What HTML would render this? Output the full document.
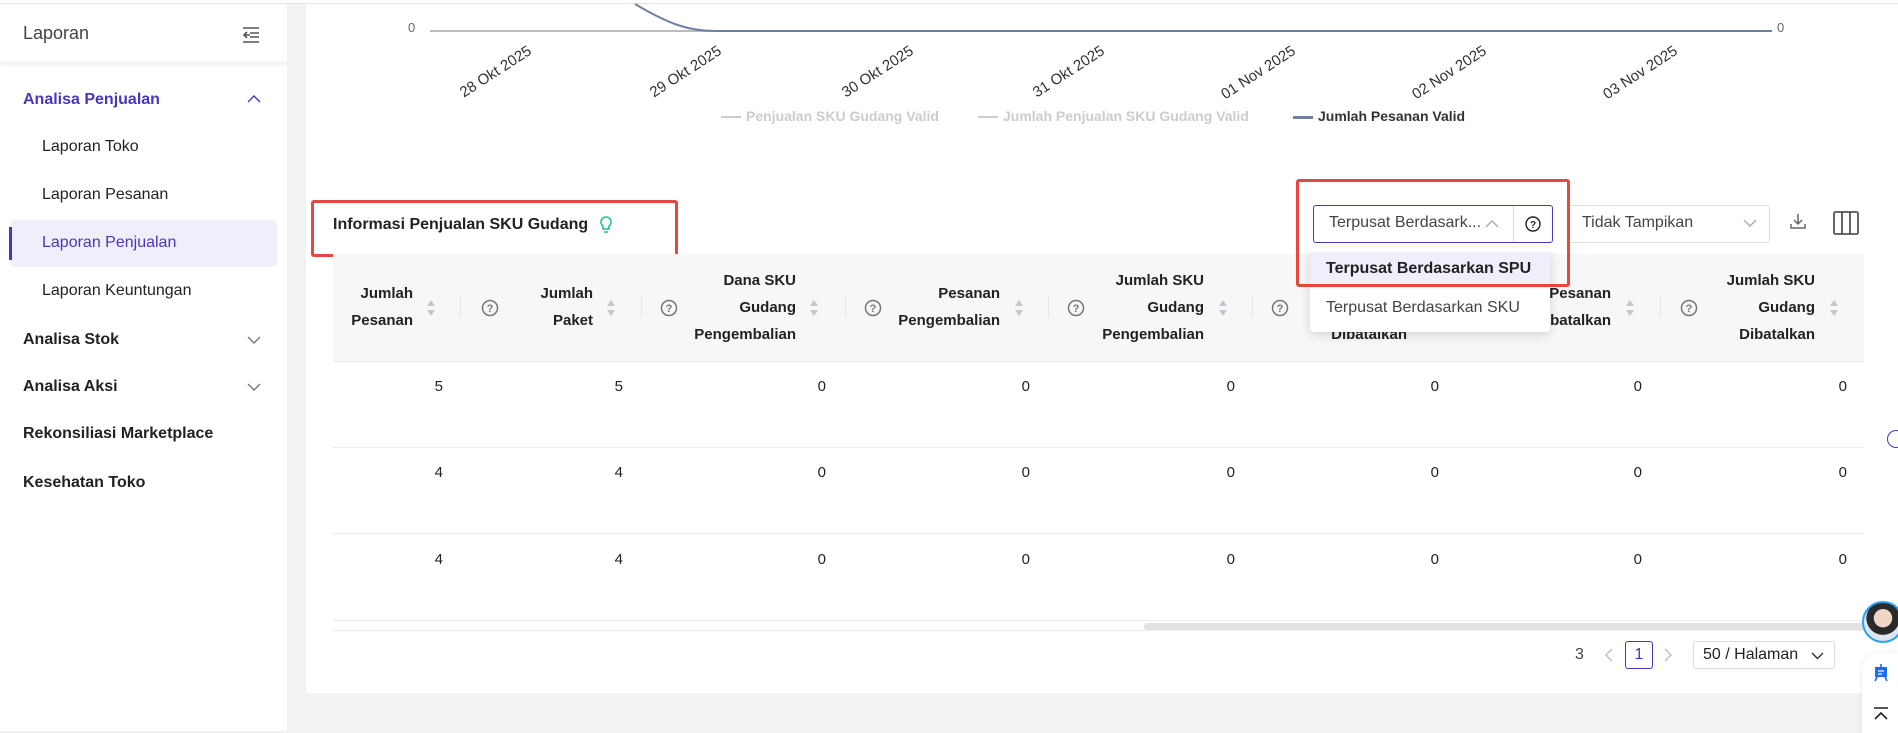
<!DOCTYPE html>
<html><head><meta charset="utf-8">
<style>
*{margin:0;padding:0;box-sizing:border-box}
body{width:1898px;height:731px;position:relative;overflow:hidden;background:#f2f2f2;font-family:"Liberation Sans",Arial,sans-serif;color:#1f1f1f}
.a{position:absolute}
.side{left:0;top:4px;width:287px;height:727px;background:#fff}
.mi{position:absolute;left:23px;font-size:16px;font-weight:bold;color:#222;line-height:20px}
.si{position:absolute;left:42px;font-size:16px;color:#222;line-height:20px}
.card{left:306px;top:4px;width:1558px;height:689px;background:#fff}
.hd{font-size:15px;font-weight:bold;color:#222;text-align:right;line-height:27px}
.sort{width:10px;height:18px}
.q{width:18px;height:18px}
.v{font-size:15px;color:#222;text-align:right;width:40px}
.sep{width:1px;height:22px;background:#e6e6e6;top:296px}
.dl{font-size:15px;color:#333;transform:rotate(-33deg);transform-origin:right center;white-space:nowrap;text-align:right;width:120px}
</style></head><body>
<div class="a" style="left:0;top:0;width:1898px;height:4px;background:#fff;border-bottom:1px solid #e2e2e2"></div>
<div class="a side">
  <div class="a" style="left:23px;top:19px;font-size:18px;color:#444">Laporan</div>
  <svg class="a" style="left:241px;top:22px" width="20" height="18" viewBox="0 0 20 18" fill="none" stroke="#555" stroke-width="1.6"><path d="M2 2h16M9 7h9M9 11h9M2 16h16M6 6l-3 3 3 3M3 9h6"/></svg>
  <div class="a" style="left:0;top:58px;width:287px;height:2px;box-shadow:0 1px 3px rgba(0,0,0,.08);background:#f3f3f3"></div>
  <div class="mi" style="top:86px;color:#4a36b8">Analisa Penjualan</div>
  <svg class="a" style="left:247px;top:90px" width="14" height="9" viewBox="0 0 14 9" fill="none" stroke="#4a36b8" stroke-width="1.4"><path d="M1 8l6-6 6 6"/></svg>
  <div class="si" style="top:133px">Laporan Toko</div>
  <div class="si" style="top:181px">Laporan Pesanan</div>
  <div class="a" style="left:10px;top:216px;width:267px;height:47px;background:#f1eefc;border-radius:5px"></div>
  <div class="a" style="left:9px;top:223px;width:3px;height:33px;background:#4a36b8"></div>
  <div class="si" style="top:229px;color:#4a36b8">Laporan Penjualan</div>
  <div class="si" style="top:277px">Laporan Keuntungan</div>
  <div class="mi" style="top:326px">Analisa Stok</div>
  <svg class="a" style="left:247px;top:332px" width="14" height="9" viewBox="0 0 14 9" fill="none" stroke="#777" stroke-width="1.4"><path d="M1 1l6 6 6-6"/></svg>
  <div class="mi" style="top:373px">Analisa Aksi</div>
  <svg class="a" style="left:247px;top:379px" width="14" height="9" viewBox="0 0 14 9" fill="none" stroke="#777" stroke-width="1.4"><path d="M1 1l6 6 6-6"/></svg>
  <div class="mi" style="top:420px">Rekonsiliasi Marketplace</div>
  <div class="mi" style="top:469px">Kesehatan Toko</div>
</div>
<div class="a" style="left:1864px;top:4px;width:34px;height:689px;background:#fff"></div>
<div class="a card"></div>
<!-- chart -->
<div class="a" style="left:408px;top:20px;font-size:13px;color:#666">0</div>
<div class="a" style="left:1777px;top:20px;font-size:13px;color:#666">0</div>
<svg class="a" style="left:420px;top:0" width="1360" height="40"><path d="M10 31H1352" stroke="#bbb" stroke-width="2"/><path d="M215 4C250 25 270 31 295 31H1352" stroke="#6e7fa3" stroke-width="2" fill="none"/></svg>
<div class="a dl" style="left:410px;top:41px">28 Okt 2025</div>
<div class="a dl" style="left:600px;top:41px">29 Okt 2025</div>
<div class="a dl" style="left:792px;top:41px">30 Okt 2025</div>
<div class="a dl" style="left:983px;top:41px">31 Okt 2025</div>
<div class="a dl" style="left:1174px;top:41px">01 Nov 2025</div>
<div class="a dl" style="left:1365px;top:41px">02 Nov 2025</div>
<div class="a dl" style="left:1556px;top:41px">03 Nov 2025</div>
<div class="a" style="left:721px;top:108px;font-size:14px;font-weight:bold;color:#ccc;white-space:nowrap"><span style="display:inline-block;width:20px;height:2px;background:#ccc;vertical-align:middle;margin-right:5px"></span>Penjualan SKU Gudang Valid</div>
<div class="a" style="left:978px;top:108px;font-size:14px;font-weight:bold;color:#ccc;white-space:nowrap"><span style="display:inline-block;width:20px;height:2px;background:#ccc;vertical-align:middle;margin-right:5px"></span>Jumlah Penjualan SKU Gudang Valid</div>
<div class="a" style="left:1293px;top:108px;font-size:14px;font-weight:bold;color:#333;white-space:nowrap"><span style="display:inline-block;width:20px;height:3px;background:#6e7fa3;vertical-align:middle;margin-right:5px"></span>Jumlah Pesanan Valid</div>
<!-- title -->
<div class="a" style="left:311px;top:200px;width:367px;height:57px;border:3px solid #e8473f;border-radius:3px"></div>
<div class="a" style="left:333px;top:216px;font-size:16px;font-weight:bold;color:#222">Informasi Penjualan SKU Gudang</div>
<svg class="a" style="left:600px;top:216px" width="12" height="18" viewBox="0 0 12 18" fill="none" stroke="#1fc18a" stroke-width="1.6"><path d="M6 1a5 5 0 0 0-3 9v3h6v-3a5 5 0 0 0-3-9zM4 16h4"/></svg>
<!-- table header -->
<div class="a" style="left:333px;top:254px;width:1531px;height:108px;background:#f7f7f7;border-bottom:1px solid #e8e8e8"></div>
<svg width="0" height="0" style="position:absolute"><defs>
<g id="s"><path d="M5 1l4 6H1z" fill="#c4c7cf"/><path d="M5 17l4-6H1z" fill="#c4c7cf"/></g>
<g id="q"><circle cx="9" cy="9" r="7.5" fill="none" stroke="#777" stroke-width="1.5"/><text x="9" y="13" font-size="11" text-anchor="middle" fill="#777" font-family="Liberation Sans" font-weight="bold">?</text></g>
</defs></svg>
<div class="a hd" style="right:1485px;top:280px">Jumlah<br>Pesanan</div><svg class="a sort" style="left:426px;top:299px"><use href="#s"/></svg>
<div class="a sep" style="left:460px"></div><svg class="a q" style="left:481px;top:299px"><use href="#q"/></svg>
<div class="a hd" style="right:1305px;top:280px">Jumlah<br>Paket</div><svg class="a sort" style="left:606px;top:299px"><use href="#s"/></svg>
<div class="a sep" style="left:641px"></div><svg class="a q" style="left:660px;top:299px"><use href="#q"/></svg>
<div class="a hd" style="right:1102px;top:267px">Dana SKU<br>Gudang<br>Pengembalian</div><svg class="a sort" style="left:809px;top:299px"><use href="#s"/></svg>
<div class="a sep" style="left:845px"></div><svg class="a q" style="left:864px;top:299px"><use href="#q"/></svg>
<div class="a hd" style="right:898px;top:280px">Pesanan<br>Pengembalian</div><svg class="a sort" style="left:1014px;top:299px"><use href="#s"/></svg>
<div class="a sep" style="left:1048px"></div><svg class="a q" style="left:1067px;top:299px"><use href="#q"/></svg>
<div class="a hd" style="right:694px;top:267px">Jumlah SKU<br>Gudang<br>Pengembalian</div><svg class="a sort" style="left:1218px;top:299px"><use href="#s"/></svg>
<div class="a sep" style="left:1252px"></div><svg class="a q" style="left:1271px;top:299px"><use href="#q"/></svg>
<div class="a hd" style="right:491px;top:267px">Jumlah SKU<br>Gudang<br>Dibatalkan</div><svg class="a sort" style="left:1421px;top:299px"><use href="#s"/></svg>
<div class="a sep" style="left:1456px"></div><svg class="a q" style="left:1476px;top:299px"><use href="#q"/></svg>
<div class="a hd" style="right:287px;top:280px">Pesanan<br>Dibatalkan</div><svg class="a sort" style="left:1625px;top:299px"><use href="#s"/></svg>
<div class="a sep" style="left:1660px"></div><svg class="a q" style="left:1680px;top:299px"><use href="#q"/></svg>
<div class="a hd" style="right:83px;top:267px">Jumlah SKU<br>Gudang<br>Dibatalkan</div><svg class="a sort" style="left:1829px;top:299px"><use href="#s"/></svg>
<!-- rows -->
<div class="a" style="left:333px;top:447px;width:1531px;height:1px;background:#ececec"></div>
<div class="a" style="left:333px;top:533px;width:1531px;height:1px;background:#ececec"></div>
<div class="a" style="left:333px;top:620px;width:1531px;height:1px;background:#ececec"></div>
<div class="a" style="left:333px;top:622px;width:1531px;height:9px;border-bottom:1px solid #ececec"></div>
<div class="a" style="left:1144px;top:623px;width:720px;height:7px;background:#e2e2e2;border-radius:3px"></div>
<div id="rows"></div>
<!-- dropdown controls -->
<div class="a" style="left:1313px;top:205px;width:240px;height:38px;border:1px solid #4a36b8;border-radius:3px;background:#fff"></div>
<div class="a" style="left:1329px;top:214px;font-size:16px;color:#444">Terpusat Berdasark...</div>
<svg class="a" style="left:1485px;top:219px" width="14" height="9" viewBox="0 0 14 9" fill="none" stroke="#aaa" stroke-width="1.4"><path d="M1 8l6-6 6 6"/></svg>
<div class="a" style="left:1513px;top:206px;width:1px;height:36px;background:#ddd"></div>
<svg class="a" style="left:1524px;top:215px" width="18" height="18"><circle cx="9" cy="9" r="7" fill="none" stroke="#222" stroke-width="1.4"/><text x="9" y="13" font-size="10" text-anchor="middle" fill="#222" font-family="Liberation Sans" font-weight="bold">?</text></svg>
<div class="a" style="left:1567px;top:205px;width:203px;height:38px;border:1px solid #ddd;border-radius:3px;background:#fff"></div>
<div class="a" style="left:1582px;top:214px;font-size:16px;color:#444">Tidak Tampikan</div>
<svg class="a" style="left:1743px;top:219px" width="14" height="9" viewBox="0 0 14 9" fill="none" stroke="#aaa" stroke-width="1.4"><path d="M1 1l6 6 6-6"/></svg>
<svg class="a" style="left:1789px;top:212px" width="18" height="18" viewBox="0 0 18 18" fill="none" stroke="#666" stroke-width="1.5"><path d="M9 2v10M5 8l4 4 4-4M2 12v4h14v-4"/></svg>
<svg class="a" style="left:1833px;top:211px" width="26" height="24" viewBox="0 0 26 24" fill="none" stroke="#555" stroke-width="1.8"><rect x="1" y="1" width="24" height="22" rx="1.5"/><path d="M9 1v22M17 1v22"/></svg>
<div class="a" style="left:1310px;top:248px;width:240px;height:84px;background:#fff;border-radius:4px;box-shadow:0 3px 10px rgba(0,0,0,.14)"></div>
<div class="a" style="left:1310px;top:252px;width:240px;height:36px;background:#f1eefc"></div>
<div class="a" style="left:1326px;top:260px;font-size:16px;font-weight:bold;color:#222">Terpusat Berdasarkan SPU</div>
<div class="a" style="left:1326px;top:299px;font-size:16px;color:#444">Terpusat Berdasarkan SKU</div>
<div class="a" style="left:1296px;top:179px;width:274px;height:108px;border:3px solid #e8473f;border-radius:3px"></div>
<!-- pagination -->
<div class="a" style="left:1575px;top:646px;font-size:16px;color:#444">3</div>
<svg class="a" style="left:1604px;top:648px" width="9" height="14" fill="none" stroke="#bbb" stroke-width="1.3"><path d="M8 1L2 7l6 6"/></svg>
<div class="a" style="left:1625px;top:641px;width:28px;height:28px;border:1px solid #4a36b8;border-radius:3px;font-size:16px;color:#4a36b8;text-align:center;line-height:26px">1</div>
<svg class="a" style="left:1664px;top:648px" width="9" height="14" fill="none" stroke="#bbb" stroke-width="1.3"><path d="M1 1l6 6-6 6"/></svg>
<div class="a" style="left:1693px;top:641px;width:142px;height:28px;border:1px solid #ddd;border-radius:3px;font-size:16px;color:#222;line-height:26px;padding-left:9px">50 / Halaman</div>
<svg class="a" style="left:1811px;top:652px" width="13" height="8" fill="none" stroke="#333" stroke-width="1.4"><path d="M1 1l5.5 5.5L12 1"/></svg>
<!-- floating -->
<div class="a" style="left:1887px;top:430px;width:18px;height:18px;border:1.5px solid #4a36b8;border-radius:50%;background:#fff"></div>
<div class="a" style="left:1862px;top:601px;width:42px;height:42px;border-radius:50%;background:radial-gradient(circle at 50% 40%,#f0d6c6 0 30%,#2a2a2a 32% 55%,#dfe6ee 57%);border:2px solid #2aa0f0"></div>
<div class="a" style="left:1862px;top:653px;width:40px;height:80px;background:#fff;border-radius:18px 0 0 0;box-shadow:0 0 6px rgba(0,0,0,.08)"></div>
<svg class="a" style="left:1873px;top:664px" width="16" height="18" viewBox="0 0 16 18"><path d="M2 3h12v10H2z" fill="#1a6cf0"/><path d="M4 13l-2 4M12 13l2 4M8 0v3" stroke="#1a6cf0" stroke-width="1.6"/><path d="M5 7h6M5 10h4" stroke="#fff" stroke-width="1.3"/></svg>
<svg class="a" style="left:1873px;top:707px" width="16" height="14" fill="none" stroke="#222" stroke-width="1.6"><path d="M1 1h14M2 12l6-6 6 6"/></svg>
<script>
var xs=[443,623,826,1030,1235,1439,1642,1847],ys=[378,464,551],vals=[[5,5,0,0,0,0,0,0],[4,4,0,0,0,0,0,0],[4,4,0,0,0,0,0,0]],h='';
for(var r=0;r<3;r++)for(var c=0;c<8;c++)h+='<div class="a v" style="left:'+(xs[c]-40)+'px;top:'+ys[r]+'px">'+vals[r][c]+'</div>';
document.getElementById('rows').innerHTML=h;
</script>
</body></html>
